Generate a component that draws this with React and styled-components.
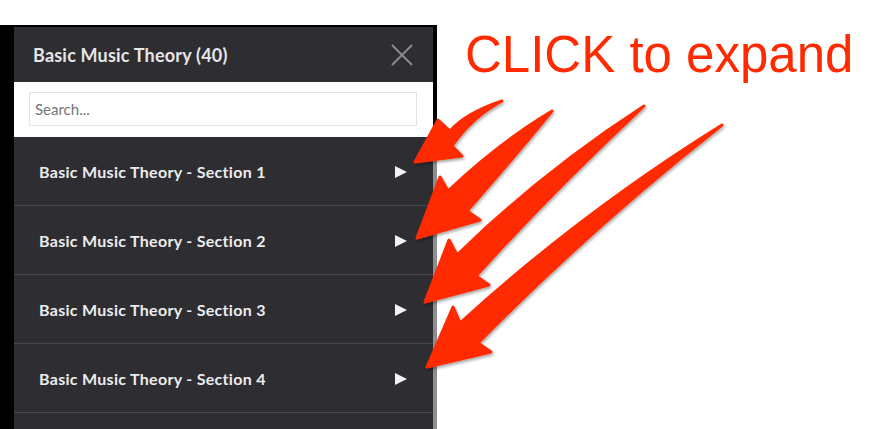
import React from 'react';
import styled, { createGlobalStyle } from 'styled-components';

const GlobalStyle = createGlobalStyle`
  body {
    margin: 0;
    background: #fff;
    font-family: Lato, "Open Sans", sans-serif;
  }
`

const StyledPage = styled.div`
  position: relative;
  width: 877px;
  height: 429px;
  overflow: hidden;
  display: flex;
  align-items: flex-start;
`

const StyledFrame = styled.div`
  margin-top: 25px;
  padding-top: 2px;
  padding-left: 14px;
  background-color: #000;
  display: flex;
  height: 402px;
`

const StyledPanel = styled.div`
  width: 419px;
  background-color: #2e2d32;
  display: flex;
  flex-direction: column;
  overflow: hidden;
  > * {
    flex-shrink: 0;
  }
`

const StyledScrollbar = styled.div`
  width: 4px;
  background: linear-gradient(#000 0, #000 110px, #8e8e90 110px);
`

const StyledHeader = styled.div`
  height: 55px;
  display: flex;
  align-items: center;
  justify-content: space-between;
  padding: 0 20px 0 19px;
  box-sizing: border-box;
  color: #e6e6e8;
  font-size: 18px;
  letter-spacing: 0.2px;
  font-weight: bold;
`

const StyledSearchWrap = styled.div`
  background-color: #fff;
  padding: 10px 16px 11px 15px;
`

const StyledSearch = styled.input`
  display: block;
  width: 100%;
  height: 34px;
  box-sizing: border-box;
  border: 1px solid #e4e4e4;
  padding: 0 5px;
  font-family: Lato, sans-serif;
  font-size: 15px;
  color: #333;
  ::placeholder {
    color: #6a6a6a;
  }
  :focus {
    outline: none;
  }
`

const StyledRow = styled.div`
  height: 68px;
  border-bottom: 1px solid #47464b;
  display: flex;
  align-items: center;
  justify-content: space-between;
  padding: 0 26px 0 25px;
  color: #ececee;
  font-size: 16px;
  letter-spacing: 0.3px;
  font-weight: bold;
`

const StyledTriangle = styled.div`
  width: 0;
  height: 0;
  margin-top: 1px;
  border-style: solid;
  border-width: 6.5px 0 6.5px 12px;
  border-color: transparent transparent transparent #f2f2f2;
`

const StyledNote = styled.div`
  margin-left: 28px;
  padding-top: 29px;
  font-family: "Liberation Sans", Arial, sans-serif;
  font-size: 51px;
  line-height: 1;
  color: #ff2a00;
  white-space: nowrap;
`

const StyledArrows = styled.svg`
  position: absolute;
  left: 0;
  top: 0;
  pointer-events: none;
`

const CloseIcon = () => (
  <svg width="22" height="22" viewBox="0 0 22 22">
    <path d="M1 1 L21 21 M21 1 L1 21" stroke="#8a8a8e" strokeWidth="2" />
  </svg>
)

const arrows = [
  'M502 101 Q466 113 450 131 L438 120 L415 162 L462 156 L452 146 Q472 117 502 101 Z',
  'M552 111 Q500 142 448 191 L440 177 L417 238 L480 220 L467 211 Q512 160 552 111 Z',
  'M644 106 Q542 172 457 255 L449 240 L425 302 L489 285 L476 276 Q552 192 644 106 Z',
  'M722 125 Q582 212 460 323 L453 307 L427 367 L491 352 L478 343 Q592 227 722 125 Z',
]

const sections = [1, 2, 3, 4, 5]

export default function App() {
  return (
    <>
      <GlobalStyle />
      <StyledPage>
        <StyledFrame>
          <StyledPanel>
            <StyledHeader>
              Basic Music Theory (40)
              <CloseIcon />
            </StyledHeader>
            <StyledSearchWrap>
              <StyledSearch type="text" placeholder="Search..." />
            </StyledSearchWrap>
            {sections.map(n => (
              <StyledRow key={n}>
                {n < 5 ? `Basic Music Theory - Section ${n}` : ''}
                {n < 5 && <StyledTriangle />}
              </StyledRow>
            ))}
          </StyledPanel>
          <StyledScrollbar />
        </StyledFrame>
        <StyledNote>CLICK to expand</StyledNote>
        <StyledArrows width="877" height="429" viewBox="0 0 877 429">
          <defs>
            <filter id="shadow" x="-20%" y="-20%" width="140%" height="140%">
              <feDropShadow dx="1" dy="2" stdDeviation="1.5" floodColor="#000" floodOpacity="0.35" />
            </filter>
          </defs>
          {arrows.map((d, i) => (
            <path key={i} d={d} fill="#ff2a00" stroke="#ff2a00" strokeWidth="3" strokeLinejoin="round" filter="url(#shadow)" />
          ))}
        </StyledArrows>
      </StyledPage>
    </>
  )
}
